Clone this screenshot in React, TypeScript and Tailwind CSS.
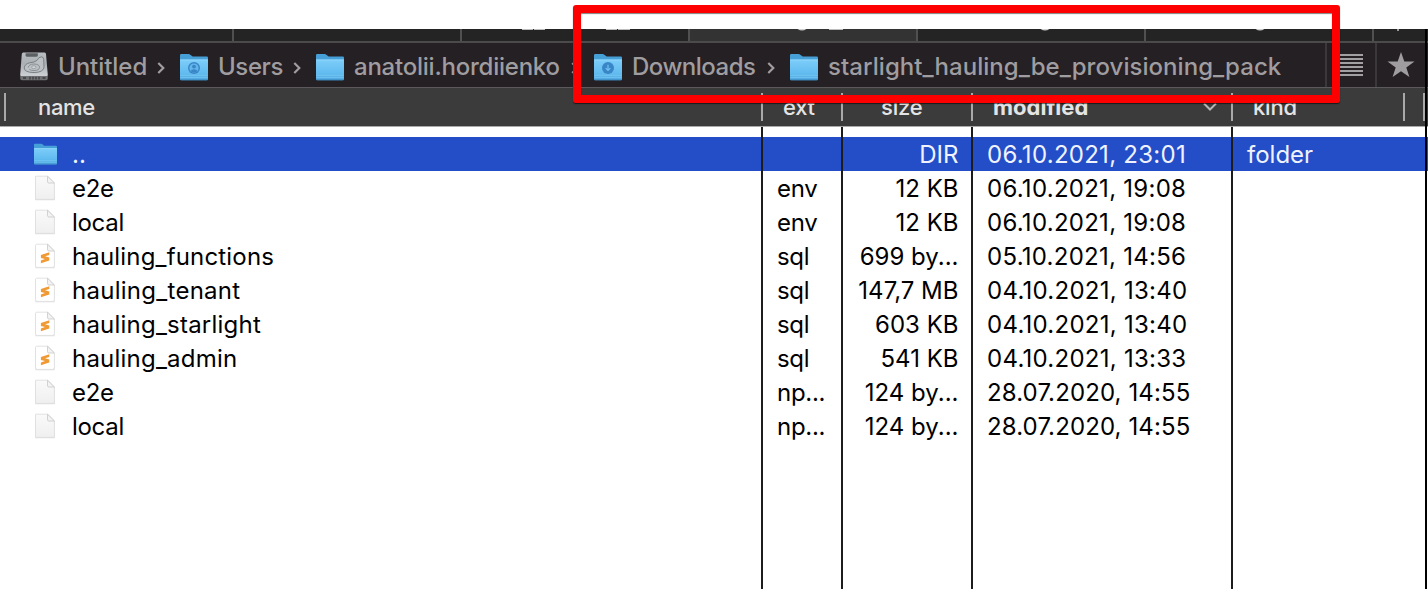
import type { ReactNode } from "react";

type FileKind = "folder" | "blank" | "sublime";
type Row = { name: string; track?: string; ext: string; size: string; modified: string; kind: string; icon: FileKind };

const rows: Row[] = [
  { name: "..", ext: "", size: "DIR", modified: "06.10.2021, 23:01", kind: "folder", icon: "folder" },
  { name: "e2e", track: "tracking-[-0.3px]", ext: "env", size: "12 KB", modified: "06.10.2021, 19:08", kind: "", icon: "blank" },
  { name: "local", track: "tracking-[-0.3px]", ext: "env", size: "12 KB", modified: "06.10.2021, 19:08", kind: "", icon: "blank" },
  { name: "hauling_functions", track: "tracking-[0.17px]", ext: "sql", size: "699 by...", modified: "05.10.2021, 14:56", kind: "", icon: "sublime" },
  { name: "hauling_tenant", track: "tracking-[0.27px]", ext: "sql", size: "147,7 MB", modified: "04.10.2021, 13:40", kind: "", icon: "sublime" },
  { name: "hauling_starlight", track: "tracking-[0.22px]", ext: "sql", size: "603 KB", modified: "04.10.2021, 13:40", kind: "", icon: "sublime" },
  { name: "hauling_admin", track: "tracking-[0.22px]", ext: "sql", size: "541 KB", modified: "04.10.2021, 13:33", kind: "", icon: "sublime" },
  { name: "e2e", track: "tracking-[-0.3px]", ext: "np...", size: "124 by...", modified: "28.07.2020, 14:55", kind: "", icon: "blank" },
  { name: "local", track: "tracking-[-0.3px]", ext: "np...", size: "124 by...", modified: "28.07.2020, 14:55", kind: "", icon: "blank" },
];

function Defs() {
  return (
    <svg className="absolute h-0 w-0" aria-hidden="true">
      <defs>
        <linearGradient id="folderFront" x1="0" y1="0" x2="0" y2="1">
          <stop offset="0" stopColor="#7dcdf9" />
          <stop offset="0.65" stopColor="#62bcf0" />
          <stop offset="1" stopColor="#4fa5dc" />
        </linearGradient>
        <linearGradient id="paper" x1="0" y1="0" x2="0" y2="1">
          <stop offset="0" stopColor="#fafafa" />
          <stop offset="1" stopColor="#efefef" />
        </linearGradient>
        <linearGradient id="disk" x1="0" y1="0" x2="0" y2="1">
          <stop offset="0" stopColor="#b9bec2" />
          <stop offset="0.5" stopColor="#aab0b4" />
          <stop offset="1" stopColor="#c9ced1" />
        </linearGradient>
      </defs>
    </svg>
  );
}

function Folder({ className, badge }: { className: string; badge?: "user" | "download" }) {
  return (
    <svg viewBox="0 0 28 28" preserveAspectRatio="none" className={className}>
      <path d="M0 2.2Q0 1 1.2 1H8.6Q9.6 1 10.3 1.7L12 3.1Q12.6 3.6 13.4 3.6H26.8Q28 3.6 28 4.8V10H0Z" fill="#479fd8" />
      <path d="M0 6.6H28V26Q28 27.3 26.7 27.3H1.3Q0 27.3 0 26Z" fill="url(#folderFront)" />
      <path d="M0.4 7H27.6" stroke="#98d9fb" strokeWidth="0.8" />
      <path d="M0.4 22.3H27.6M0.4 24.4H27.6" stroke="#7accf6" strokeWidth="0.7" />
      <path d="M0.6 26.8H27.4" stroke="#3787c0" strokeWidth="0.8" />
      {badge && <circle cx="14" cy="15" r="6" fill="#3985c6" />}
      {badge === "user" && (
        <g>
          <circle cx="14" cy="15" r="4.6" fill="#62b6ec" />
          <path d="M10.6 17.9Q11.3 16.2 14 16.2T17.4 17.9Q16.2 19.5 14 19.5T10.6 17.9Z" fill="#3985c6" />
          <circle cx="14" cy="13.6" r="1.9" fill="#3985c6" />
        </g>
      )}
      {badge === "download" && (
        <path d="M14 11.8V17.2M11.7 15.2L14 17.5L16.3 15.2" fill="none" stroke="#70c3f5" strokeWidth="1.2" />
      )}
    </svg>
  );
}

function Disk() {
  return (
    <svg viewBox="0 0 28 29" className="mt-0.5 h-[29px] w-7 shrink-0">
      <path d="M3.2 0.5H24.6Q25.8 0.5 26 2L27.8 23H0.2L1.8 2Q2 0.5 3.2 0.5Z" fill="url(#disk)" />
      <path d="M0.2 23H27.8V26Q27.8 28.3 26 28.3H2Q0.2 28.3 0.2 26Z" fill="#6f7173" />
      <path d="M0.6 23.4H27.4" stroke="#d5d9dc" strokeWidth="1" />
      <path d="M3 26H6M10 24.8V27.5M13 24.8V27.5M16 24.8V27.5M19 24.8V27.5M22.5 26H25.5" stroke="#3b3b3d" strokeWidth="1.3" />
      <path d="M5.6 1.3H17.8V3.2Q17.8 4.8 16.2 4.8H7.2Q5.6 4.8 5.6 3.2Z" fill="#5c6063" />
      <path
        d="M4.2 16Q4.6 11.8 9.8 10.8Q14.6 10.4 17 8.4Q18.6 4.8 21.6 4.8Q23.6 5 23.7 7.5L24 15.2Q23.4 20.3 14 20.6Q4.4 20.3 4.2 16Z"
        fill="#bbc1c4"
        stroke="#74797c"
        strokeWidth="0.9"
      />
      <path d="M8.2 15.6Q8.7 12.2 13.8 12Q19.4 12.1 19.6 15.3Q19.2 18.5 14 18.6Q10.8 18.5 9.4 17.4" fill="none" stroke="#7b8184" strokeWidth="0.8" />
      <ellipse cx="13.8" cy="15.2" rx="2.2" ry="1.5" fill="#cfd4d7" stroke="#80868a" strokeWidth="0.6" />
    </svg>
  );
}

function Paper({ sublime }: { sublime?: boolean }) {
  return (
    <svg viewBox="0 0 22 26" className={`h-[26px] w-[22px] shrink-0 ${sublime ? "mb-px" : ""}`}>
      <path d="M1.4 1.6H13.7L20.6 8.6V24.7H1.4Z" fill="#bbb" opacity="0.45" transform="translate(0 0.5)" />
      <path
        d={sublime ? "M2.8 1.2H13.8L20.4 8V22.5Q20.4 24.4 18.6 24.4H3.2Q1.5 24.4 1.5 22.5V2.6Q1.5 1.2 2.8 1.2Z" : "M1.5 1.2H13.8L20.4 8V24.4H1.5Z"}
        fill={sublime ? "#fff" : "url(#paper)"}
        stroke="#dcdcdc"
        strokeWidth="0.8"
      />
      <path d="M13.5 1.2V6.8Q13.6 8 14.8 8H20.4Z" fill="#f3f3f3" stroke="#c8c8c8" strokeWidth="0.8" />
      {sublime && (
        <path d="M15.3 9.2V11.9L11.1 13.3L15.3 14.5V17.5L6.9 20.3V17.5L11 16.1L6.9 14.9V11.9Z" fill="#f09a35" />
      )}
    </svg>
  );
}

function Chevron() {
  return (
    <svg viewBox="0 0 10 14" className="mt-[5px] h-3.5 w-2.5 shrink-0">
      <path d="M2.3 2L7.3 7L2.3 12" fill="none" stroke="#a09da0" strokeWidth="2.2" />
    </svg>
  );
}

function Crumb({ icon, label, box, text, last }: { icon: ReactNode; label: string; box: string; text: string; last?: boolean }) {
  return (
    <div className={`flex h-full shrink-0 items-center ${box}`}>
      {icon}
      <span className={`ml-2.5 flex-1 whitespace-nowrap pt-1 ${text}`}>{label}</span>
      {!last && <Chevron />}
    </div>
  );
}

const folderSize = "mt-[3px] h-7 w-7 shrink-0";

function Tab({ box, children }: { box: string; children?: ReactNode }) {
  return <div className={`flex h-full shrink-0 items-start border-r-2 border-[#505050] ${box}`}>{children}</div>;
}

function Mark({ box }: { box: string }) {
  return <span className={`h-px shrink-0 bg-[#bdbdbd] ${box}`} />;
}

function Descender({ box }: { box: string }) {
  return (
    <svg viewBox="0 0 10 3" className={`h-[3px] w-2.5 shrink-0 ${box}`}>
      <path d="M0.5 0Q5 3.2 9.5 0" fill="#cecece" />
    </svg>
  );
}

export default function App() {
  return (
    <div className="relative h-[589px] w-[1428px] overflow-hidden bg-white pt-[29px] font-['Inter','Liberation_Sans',sans-serif] text-[24px] leading-[34px] text-black">
      <Defs />
      <div className="flex h-3.5 border-b-2 border-[#4b4b4b] bg-[#242424]">
        <Tab box="w-[234px]" />
        <Tab box="w-[228px]" />
        <Tab box="w-[228px]">
          <Mark box="ml-[60px] w-[11px]" />
          <Mark box="ml-px w-[11px]" />
          <Mark box="ml-[61px] w-[11px]" />
          <Mark box="ml-px w-[12px]" />
        </Tab>
        <Tab box="w-[228px] bg-[#333333]">
          <Descender box="ml-[107px]" />
          <Mark box="ml-[22px] w-[14px]" />
        </Tab>
        <Tab box="w-[228px]">
          <Descender box="ml-[122px]" />
        </Tab>
        <Tab box="w-[228px]">
          <Descender box="ml-[109px]" />
        </Tab>
        <div className="flex flex-1 items-start pl-[23px]">
          <span className="h-0.5 w-0.5 bg-[#999]" />
        </div>
      </div>

      <div className="flex h-[45px] items-center border-b border-[#5c595c] bg-[#252024] text-[#a09da0]">
        <div className="flex h-full w-[1327px] items-center border-r-2 border-[#3b383b] pl-5 font-[450]">
          <Crumb icon={<Disk />} label="Untitled" box="w-[146px] mr-3.5" text="tracking-[-0.05px]" />
          <Crumb icon={<Folder badge="user" className={folderSize} />} label="Users" box="w-[122px] mr-3.5" text="tracking-[-0.4px]" />
          <Crumb icon={<Folder className={folderSize} />} label="anatolii.hordiienko" box="w-[264px] mr-3.5" text="tracking-[-0.23px]" />
          <Crumb icon={<Folder badge="download" className={folderSize} />} label="Downloads" box="w-[182px] mr-3.5" text="tracking-[-0.5px]" />
          <Crumb icon={<Folder className={folderSize} />} label="starlight_hauling_be_provisioning_pack" box="w-[500px]" text="tracking-[0.05px]" last />
        </div>
        <div className="flex h-full w-[50px] flex-col border-r-2 border-[#3b383b] pl-[11px] pt-[11px]">
          <div className="flex w-[25px] flex-col gap-0.5">
            {[0, 1, 2, 3, 4, 5].map((i) => (
              <span key={i} className="h-0.5 w-full bg-[#a3a0a3]" />
            ))}
          </div>
        </div>
        <svg viewBox="0 0 28 28" className="ml-2.5 h-7 w-7">
          <path d="M14 1L17.3 10.5H27.5L19.3 16.4L22.4 26L14 20.2L5.6 26L8.7 16.4L0.5 10.5H10.7Z" fill="#a09da0" />
        </svg>
      </div>

      <div className="flex h-[39px] items-start border-b border-[#aaa] bg-[#3b3b3b] pl-1 pt-[5px] text-[22px] font-medium leading-7 text-[#e4e4e4]">
        <div className="h-7 w-[757px] border-l-2 border-[#a9a9a9] pl-8">
          <span className="tracking-[-0.35px]">name</span>
        </div>
        <div className="h-7 w-20 border-l-2 border-[#a9a9a9] pl-5 tracking-[-0.3px]">ext</div>
        <div className="h-7 w-[130px] border-l-2 border-[#a9a9a9] pl-[38px] tracking-[-0.2px]">size</div>
        <div className="flex h-7 w-[260px] border-l-2 border-[#a9a9a9] pl-5 font-bold">
          <span className="flex-1 tracking-[0px]">modified</span>
          <svg viewBox="0 0 16 10" className="mr-[13px] mt-[9px] h-2.5 w-4">
            <path d="M2 1.5L8 7.5L14 1.5" fill="none" stroke="#b5b5b5" strokeWidth="2" />
          </svg>
        </div>
        <div className="h-7 w-[172px] border-l-2 border-[#a9a9a9] pl-5 tracking-[-0.2px]">kind</div>
        <div className="h-7 w-5 border-l-2 border-[#a9a9a9]" />
        <div className="h-7 w-0.5 bg-[#a9a9a9]" />
      </div>

      <div className="grid h-[10px] grid-cols-[761px_80px_130px_260px_1fr]">
        <div />
        {[0, 1, 2, 3].map((i) => (
          <div key={i} className="border-l-2 border-[#1c1c1c]" />
        ))}
      </div>
      {rows.map((row, i) => (
        <div
          key={i}
          className={`grid h-[34px] grid-cols-[761px_80px_130px_260px_1fr] whitespace-nowrap leading-9 ${i === 0 ? "bg-[#234ec8] text-[#f0f3ff]" : ""}`}
        >
          <div className="flex h-[34px] items-center pl-[34px]">
            <span className="flex w-[38px] shrink-0 items-center">
              {row.icon === "folder" ? <Folder className="h-[22px] w-[23px]" /> : <Paper sublime={row.icon === "sublime"} />}
            </span>
            <span className={`pt-0.5 ${row.track ?? ""}`}>{row.name}</span>
          </div>
          <div className="h-[34px] border-l-2 border-[#1c1c1c] pl-3.5 tracking-[-0.3px]">{row.ext}</div>
          <div className="h-[34px] border-l-2 border-[#1c1c1c] pr-[12.5px] text-right">{row.size}</div>
          <div className={`h-[34px] border-l-2 border-[#1c1c1c] pl-3.5 ${row.modified.startsWith("28") ? "tracking-[0.12px]" : "tracking-[0.27px]"}`}>
            {row.modified}
          </div>
          <div className="h-[34px] border-l-2 border-[#1c1c1c] pl-3.5">{row.kind}</div>
        </div>
      ))}
      <div className="grid h-[146px] grid-cols-[761px_80px_130px_260px_1fr]">
        <div />
        {[0, 1, 2, 3].map((i) => (
          <div key={i} className="border-l-2 border-[#1c1c1c]" />
        ))}
      </div>

      <div className="absolute bottom-0 right-[1px] top-[29px] w-0.5 bg-black" />
      <div className="absolute left-[573px] top-[5px] h-[98px] w-[767px] rounded-[3px] border-8 border-[#ff0000] shadow-[0_1px_1px_rgba(0,0,0,0.6),inset_0_1px_1px_rgba(0,0,0,0.5)]" />
    </div>
  );
}
